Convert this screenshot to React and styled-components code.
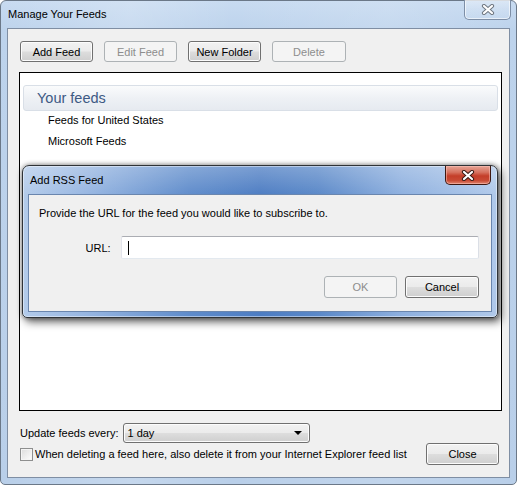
import React from 'react';
import styled, { createGlobalStyle } from 'styled-components';

const Global = createGlobalStyle`
  html, body { margin: 0; padding: 0; background: #ffffff; }
  body { font-family: "Liberation Sans", Arial, sans-serif; font-size: 11px; color: #000; }
  * { box-sizing: border-box; }
`;

const Window = styled.div`
  position: relative;
  width: 517px;
  height: 485px;
  border: 1px solid #6b7888;
  border-radius: 6px 6px 5px 5px;
  background:
    linear-gradient(90deg, rgba(255,255,255,0) 0%, rgba(255,255,255,0.18) 25%, rgba(255,255,255,0) 45%, rgba(255,255,255,0.12) 75%, rgba(255,255,255,0) 100%),
    linear-gradient(180deg, #c8dbf1 0%, #bdd3ec 6%, #b9cfe9 100%);
  display: flex;
  flex-direction: column;
`;

const TitleBar = styled.div`
  height: 27px;
  display: flex;
  align-items: flex-start;
  justify-content: space-between;
`;

const Title = styled.div`
  padding: 5px 0 0 7px;
  line-height: 16px;
  font-size: 11px;
  color: #000;
`;

const CloseBtn = styled.div`
  width: 47px;
  height: 20px;
  margin: -1px 5px 0 0;
  border: 1px solid ${p => (p.$active ? '#3e1710' : '#7d8ea6')};
  border-top: none;
  border-radius: 0 0 5px 5px;
  display: flex;
  align-items: center;
  justify-content: center;
  background: ${p =>
    p.$active
      ? 'linear-gradient(180deg, #e6a496 0%, #d6725f 35%, #c43e29 55%, #c84a34 80%, #e08670 100%)'
      : 'linear-gradient(180deg, rgba(255,255,255,0.35) 0%, rgba(255,255,255,0.15) 50%, rgba(255,255,255,0.05) 100%)'};
  box-shadow: inset 0 0 0 1px ${p => (p.$active ? 'rgba(255,200,190,0.5)' : 'rgba(255,255,255,0.6)')};
`;

const XIcon = ({ dark }) => (
  <svg width="14" height="11" viewBox="0 0 14 11">
    <path d="M3 2 L11 9 M11 2 L3 9" stroke={dark} strokeWidth="4.2" strokeLinecap="round" fill="none" />
    <path d="M3 2 L11 9 M11 2 L3 9" stroke="#ffffff" strokeWidth="2.2" strokeLinecap="round" fill="none" />
  </svg>
);

const Panel = styled.div`
  margin: 0 6px 6px 6px;
  flex: 1;
  border: 1px solid #7f8ea3;
  background: #f0f0f0;
  padding: 12px 7px 12px 11px;
  display: flex;
  flex-direction: column;
`;

const Toolbar = styled.div`
  display: flex;
  gap: 11px;
  margin-left: 1px;
  height: 21px;
`;

const Button = styled.button`
  flex: none;
  width: ${p => p.$w || 73}px;
  height: ${p => p.$h || 21}px;
  padding: 1px 0 0 0;
  font-family: inherit;
  font-size: 11px;
  line-height: 1;
  border-radius: 3px;
  border: 1px solid ${p => (p.disabled ? '#adb2b5' : '#707070')};
  color: ${p => (p.disabled ? '#8d8d8d' : '#000')};
  background: ${p =>
    p.disabled
      ? '#f4f4f4'
      : 'linear-gradient(180deg, #f2f2f2 0%, #ebebeb 48%, #dddddd 52%, #cfcfcf 100%)'};
  box-shadow: ${p => (p.disabled ? 'none' : 'inset 0 0 0 1px #fcfcfc')};
  display: flex;
  align-items: center;
  justify-content: center;
`;

const List = styled.div`
  margin-top: 10px;
  height: 339px;
  width: 483px;
  border: 1px solid #000;
  background: #fff;
  padding: 12px 3px 0 3px;
`;

const GroupHeader = styled.div`
  height: 26px;
  border: 1px solid #d9dfe7;
  border-radius: 3px;
  background: linear-gradient(180deg, #fafbfc 0%, #eef1f5 50%, #e6eaf0 100%);
  padding-left: 13px;
  display: flex;
  align-items: center;
  font-size: 14.5px;
  color: #3d5a84;
`;

const ListRow = styled.div`
  height: 21px;
  display: flex;
  align-items: center;
  padding: 0 0 3px 25px;
`;

const Footer = styled.div`
  margin-top: 12px;
  display: flex;
  flex-direction: column;
`;

const FooterRow = styled.div`
  display: flex;
  align-items: center;
  height: ${p => p.$h}px;
`;

const FieldLabel = styled.span`
  padding-left: 1px;
  margin-right: 5px;
  white-space: nowrap;
`;

const Select = styled.div`
  width: 187px;
  height: 20px;
  border: 1px solid #707070;
  border-radius: 3px;
  background: linear-gradient(180deg, #f2f2f2 0%, #ebebeb 48%, #dddddd 52%, #cfcfcf 100%);
  box-shadow: inset 0 0 0 1px #fcfcfc;
  display: flex;
  align-items: center;
  justify-content: space-between;
  padding: 0 7px 0 3px;
`;

const Arrow = styled.span`
  width: 0;
  height: 0;
  border-left: 4px solid transparent;
  border-right: 4px solid transparent;
  border-top: 4px solid #000;
`;

const Check = styled.span`
  width: 13px;
  height: 13px;
  margin-left: 1px;
  border: 1px solid #8e8f8f;
  background: linear-gradient(135deg, #dcdcdc 0%, #f0f0f0 60%, #fdfdfd 100%);
  box-shadow: inset 0 0 0 1px #f4f4f4;
  flex: none;
`;

const CheckLabel = styled.span`
  margin-left: 2px;
  white-space: nowrap;
  flex: 1;
`;

const CloseMain = styled(Button)`
  margin-right: 3px;
`;

/* Overlay dialog */
const Dialog = styled.div`
  position: absolute;
  left: 21px;
  top: 164px;
  width: 476px;
  height: 153px;
  border: 1px solid #2f3337;
  border-radius: 7px 7px 5px 5px;
  background:
    linear-gradient(180deg, rgba(255,255,255,0.25) 0%, rgba(255,255,255,0) 20%),
    linear-gradient(90deg, #b3cbea 0%, #93b3e0 15%, #5f8ccb 35%, #4d7dc3 50%, #5a88c8 62%, #8eb0df 80%, #b0c9ea 100%);
  box-shadow: 3px 4px 9px rgba(0,0,0,0.6), 0 0 5px rgba(0,0,0,0.45), inset 0 0 0 1px rgba(255,255,255,0.45);
  display: flex;
  flex-direction: column;
`;

const DialogTitleBar = styled.div`
  height: 28px;
  display: flex;
  align-items: flex-start;
  justify-content: space-between;
`;

const DialogTitle = styled.div`
  padding: 6px 0 0 7px;
  line-height: 16px;
  color: #000;
`;

const DialogClose = styled(CloseBtn)`
  width: 46px;
  height: 19px;
  margin: 0 6px 0 0;
`;

const DialogBody = styled.div`
  flex: 1;
  margin: 0 5px 5px 5px;
  border: 1px solid #6a86ae;
  background: #f0f0f0;
  padding: 10px 12px 0 10px;
  display: flex;
  flex-direction: column;
`;

const Prompt = styled.div`
  line-height: 16px;
`;

const UrlRow = styled.div`
  margin-top: 15px;
  display: flex;
  align-items: center;
  gap: 10px;
`;

const UrlLabel = styled.span`
  width: 72px;
  text-align: right;
`;

const Input = styled.div`
  width: 360px;
  height: 23px;
  border: 1px solid #abadb3;
  border-color: #abadb3 #dbdfe6 #e3e9ef #e2e3ea;
  border-radius: 2px;
  background: #fff;
  display: flex;
  align-items: center;
  padding-left: 6px;
`;

const Caret = styled.span`
  width: 1px;
  height: 14px;
  background: #000;
`;

const DialogButtons = styled.div`
  margin-top: 17px;
  display: flex;
  justify-content: flex-end;
  gap: 8px;
`;

export default function App() {
  return (
    <>
      <Global />
      <Window>
        <TitleBar>
          <Title>Manage Your Feeds</Title>
          <CloseBtn>
            <XIcon dark="#6f7782" />
          </CloseBtn>
        </TitleBar>
        <Panel>
          <Toolbar>
            <Button>Add Feed</Button>
            <Button disabled>Edit Feed</Button>
            <Button>New Folder</Button>
            <Button disabled $w={74}>Delete</Button>
          </Toolbar>
          <List>
            <GroupHeader>Your feeds</GroupHeader>
            <ListRow>Feeds for United States</ListRow>
            <ListRow>Microsoft Feeds</ListRow>
          </List>
          <Footer>
            <FooterRow $h={20}>
              <FieldLabel>Update feeds every:</FieldLabel>
              <Select>
                <span>1 day</span>
                <Arrow />
              </Select>
            </FooterRow>
            <FooterRow $h={22}>
              <Check />
              <CheckLabel>When deleting a feed here, also delete it from your Internet Explorer feed list</CheckLabel>
              <CloseMain $h={22}>Close</CloseMain>
            </FooterRow>
          </Footer>
        </Panel>

        <Dialog>
          <DialogTitleBar>
            <DialogTitle>Add RSS Feed</DialogTitle>
            <DialogClose $active>
              <XIcon dark="#3a1a14" />
            </DialogClose>
          </DialogTitleBar>
          <DialogBody>
            <Prompt>Provide the URL for the feed you would like to subscribe to.</Prompt>
            <UrlRow>
              <UrlLabel>URL:</UrlLabel>
              <Input>
                <Caret />
              </Input>
            </UrlRow>
            <DialogButtons>
              <Button disabled $h={22}>OK</Button>
              <Button $w={74} $h={22}>Cancel</Button>
            </DialogButtons>
          </DialogBody>
        </Dialog>
      </Window>
    </>
  );
}
